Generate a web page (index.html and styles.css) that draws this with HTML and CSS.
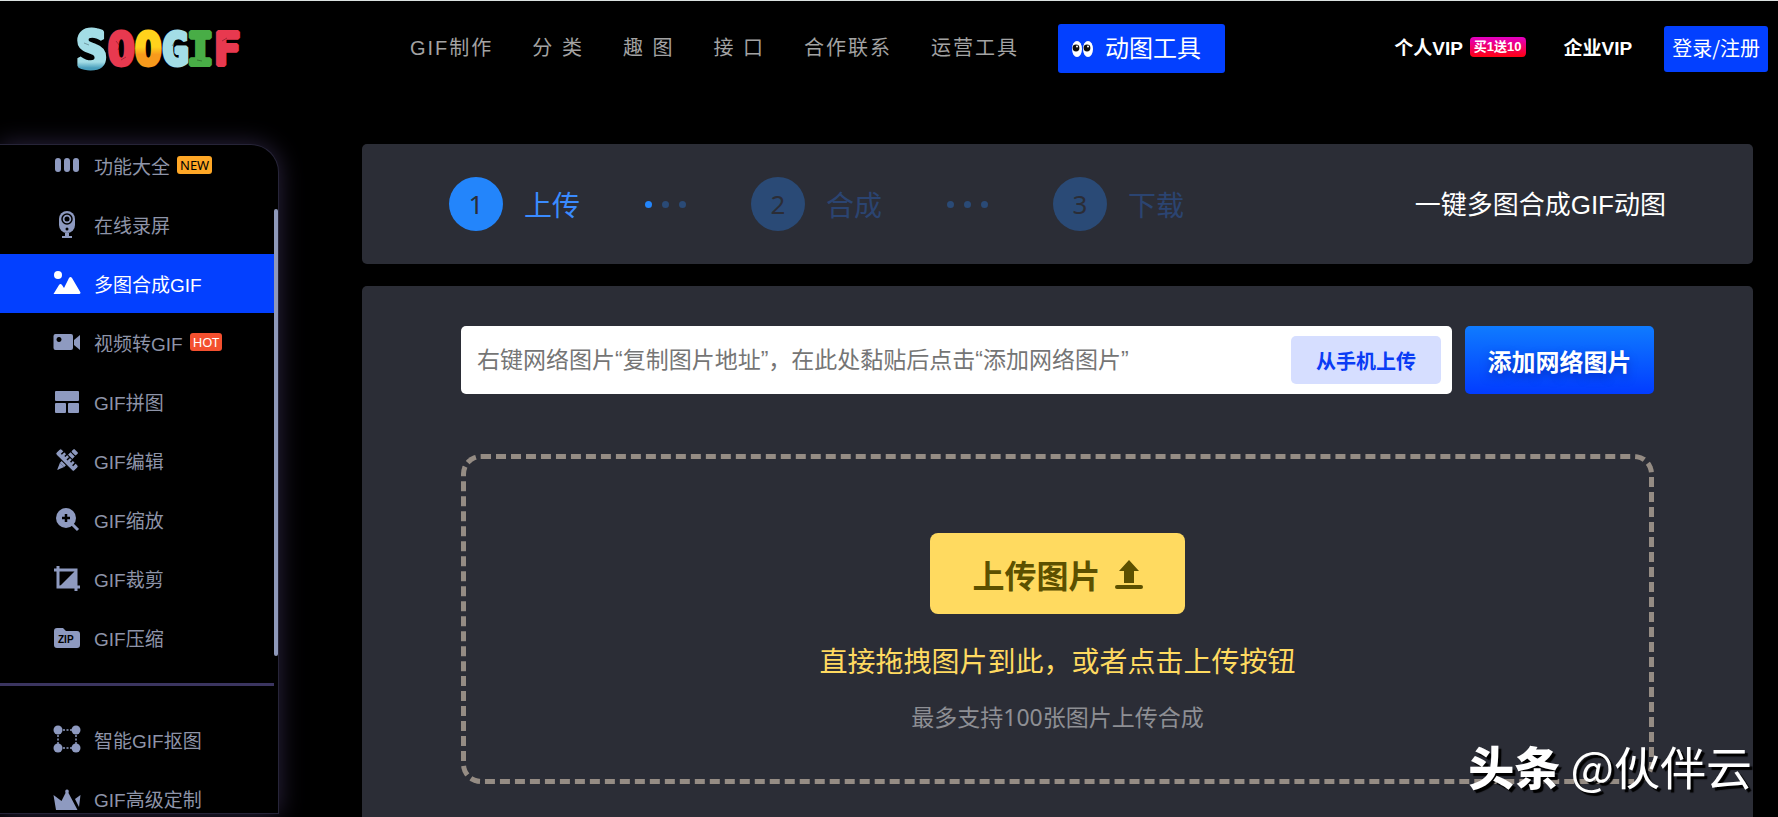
FILE: index.html
```
<!DOCTYPE html>
<html lang="zh-CN">
<head>
    <meta charset="UTF-8">
    <meta name="viewport" content="width=device-width, initial-scale=1.0">
    <title>多图合成GIF - SOOGIF</title>
    <link rel="stylesheet" href="styles.css">
</head>
<body>
    <header class="header">
        <a class="logo" href="#" aria-label="SOOGIF">
            <svg width="166" height="60" viewBox="0 0 166 60">
                <defs>
                    <linearGradient id="ice" x1="0" y1="0" x2="0" y2="1">
                        <stop offset="0.7" stop-color="#a3dde6"/>
                        <stop offset="0.8" stop-color="#4a9fbd"/>
                    </linearGradient>
                    <linearGradient id="sun" x1="0" y1="0" x2="0" y2="1">
                        <stop offset="0.45" stop-color="#ffd21c"/>
                        <stop offset="0.6" stop-color="#f79a1c"/>
                    </linearGradient>
                </defs>
                <g class="logo-text">
                    <text x="0" y="49" fill="url(#ice)" stroke="url(#ice)" class="logo-big">S</text>
                    <text x="32" y="46" fill="#e8394f" stroke="#e8394f">O</text>
                    <text x="59" y="46" fill="url(#sun)" stroke="url(#sun)">O</text>
                    <text x="86" y="46" fill="#a3dde6" stroke="#a3dde6">G</text>
                    <text x="111" y="46" fill="#48ad46" stroke="#48ad46">I</text>
                    <text x="138" y="46" fill="#e8394f" stroke="#e8394f">F</text>
                </g>
                <path class="logo-cracks" d="M40 22l4 5-2 4M50 38l-5 3M8 24l5 2M100 21l-4 6M126 42l-5-1M146 22l5-3"/>
            </svg>
        </a>
        <nav class="nav">
            <a href="#">GIF制作</a>
            <a href="#">分 类</a>
            <a href="#">趣 图</a>
            <a href="#">接 口</a>
            <a href="#">合作联系</a>
            <a href="#">运营工具</a>
            <a class="nav-tools" href="#">
                <svg width="22" height="20" viewBox="0 0 22 20">
                    <ellipse cx="5" cy="10" rx="5" ry="8" fill="#fff"/>
                    <ellipse cx="16" cy="10" rx="5" ry="8" fill="#fff"/>
                    <circle cx="4" cy="9" r="3.4" fill="#111"/>
                    <circle cx="15" cy="9" r="3.4" fill="#111"/>
                    <circle cx="5" cy="7.5" r="1" fill="#fff"/>
                    <circle cx="16" cy="7.5" r="1" fill="#fff"/>
                </svg>
                <span>动图工具</span>
            </a>
        </nav>
        <div class="account">
            <a class="vip" href="#">个人VIP<span class="vip-badge">买1送10</span></a>
            <a class="vip" href="#">企业VIP</a>
            <button class="login" type="button">登录/注册</button>
        </div>
    </header>

    <div class="layout">
        <aside class="sidebar">
            <div class="menu-wrap">
                <ul class="menu">
                    <li><a href="#">
                        <svg viewBox="0 0 28 28"><rect x="2" y="7" width="6" height="14" rx="3"/><rect x="11" y="7" width="6" height="14" rx="3"/><rect x="20" y="7" width="6" height="14" rx="3"/></svg>
                        功能大全<span class="tag tag-new">NEW</span></a></li>
                    <li><a href="#">
                        <svg viewBox="0 0 28 28"><rect x="6" y="1" width="16" height="22" rx="8"/><circle cx="14" cy="9" r="5" fill="none" stroke="#000" stroke-width="1.5"/><circle cx="14" cy="9" r="2.5" fill="#000"/><circle cx="14" cy="19" r="1.5" fill="#000"/><path d="M12 23h4v3h3v2H9v-2h3z"/></svg>
                        在线录屏</a></li>
                    <li><a class="active" href="#">
                        <svg viewBox="0 0 28 28"><circle cx="5" cy="6" r="4"/><path d="M.5 25 6 16q1.500-2 3 0l2 3L16 9q1.500-2 3 0l8.500 14.500q0 1.500-1.500 1.500z"/></svg>
                        多图合成GIF</a></li>
                    <li><a href="#">
                        <svg viewBox="0 0 28 28"><path fill-rule="evenodd" d="M2.500 6H18q2 0 2 2v12q0 2-2 2H2.500q-2 0-2-2V8q0-2 2-2zM6 9a2.500 2.500 0 1 0 .01 0z"/><path d="M21 12l6-5v15l-6-5z"/></svg>
                        视频转GIF<span class="tag tag-hot">HOT</span></a></li>
                    <li><a href="#">
                        <svg viewBox="0 0 28 28"><rect x="2" y="4" width="24" height="10" rx="1"/><rect x="2" y="16" width="11" height="10" rx="1"/><rect x="15" y="16" width="11" height="10" rx="1"/></svg>
                        GIF拼图</a></li>
                    <li><a href="#">
                        <svg viewBox="0 0 28 28"><g transform="rotate(45 14 14)"><rect x="11" y="1" width="6" height="4" rx="1"/><rect x="11" y="6" width="6" height="15"/><path d="M11 21h6l-3 7z"/></g><g transform="rotate(-45 14 14)"><rect x="10" y="1" width="8" height="26" rx="2" stroke="#000"/><path d="M14 6h4M15 10h3M14 14h4M15 18h3M14 22h4" stroke="#000" stroke-width="1.500"/></g></svg>
                        GIF编辑</a></li>
                    <li><a href="#">
                        <svg viewBox="0 0 28 28"><circle cx="13" cy="13" r="10"/><path d="M19 19l6 6" class="line"/><path d="M13 9v8M9 13h8" stroke="#000" stroke-width="2.500"/></svg>
                        GIF缩放</a></li>
                    <li><a href="#">
                        <svg viewBox="0 0 28 28"><path d="M1 6h22v21M5 2v21h22" class="line"/><path d="M23 6v17H6z"/></svg>
                        GIF裁剪</a></li>
                    <li><a href="#">
                        <svg viewBox="0 0 28 28"><path d="M4 5h6l3 3h11q3 0 3 3v11q0 3-3 3H4q-3 0-3-3V8q0-3 3-3z"/><text x="5" y="20" class="zip">ZIP</text></svg>
                        GIF压缩</a></li>
                </ul>
                <ul class="menu menu-extra">
                    <li><a href="#">
                        <svg viewBox="0 0 28 28"><circle cx="5" cy="5" r="4.500"/><circle cx="23" cy="5" r="4.500"/><circle cx="5" cy="23" r="4.500"/><circle cx="23" cy="23" r="4.500"/><path d="M10 5h9M10 23h9M5 10v9M23 10v9" fill="none" stroke="#8e9ac0" stroke-width="1.500" stroke-dasharray="2 1.500"/></svg>
                        智能GIF抠图</a></li>
                    <li><a href="#">
                        <svg viewBox="0 0 28 28"><path d="M3 26 .5 11l8 6 4-8q-1-3.500 1.500-3.500T15.500 9l9 17z"/><path d="M27.500 11 26 23l-4-8z"/></svg>
                        GIF高级定制</a></li>
                </ul>
            </div>
            <span class="scroll-thumb"></span>
        </aside>

        <main class="content">
            <section class="panel steps">
                <ol class="step-list">
                    <li class="step current"><span class="step-num">1</span>上传</li>
                    <li class="dots current" aria-hidden="true"><i></i><i></i><i></i></li>
                    <li class="step"><span class="step-num">2</span>合成</li>
                    <li class="dots" aria-hidden="true"><i></i><i></i><i></i></li>
                    <li class="step"><span class="step-num">3</span>下载</li>
                </ol>
                <h1>一键多图合成GIF动图</h1>
            </section>

            <section class="panel upload">
                <form class="url-form">
                    <div class="url-box">
                        <input type="text" aria-label="网络图片地址" placeholder="右键网络图片“复制图片地址”，在此处黏贴后点击“添加网络图片”">
                        <button class="from-phone" type="button">从手机上传</button>
                    </div>
                    <button class="add-url" type="button">添加网络图片</button>
                </form>
                <div class="dropzone">
                    <button class="upload-btn" type="button">
                        上传图片
                        <svg width="28" height="30" viewBox="0 0 28 30"><path d="M14 1l10 11h-5v12H9V12H4z"/><rect x="0" y="26" width="28" height="4" rx="2"/></svg>
                    </button>
                    <p class="drop-text">直接拖拽图片到此，或者点击上传按钮</p>
                    <p class="drop-note">最多支持100张图片上传合成</p>
                </div>
            </section>
        </main>
    </div>

    <div class="watermark"><b>头条</b> @伙伴云</div>
</body>
</html>
```
FILE: styles.css
```
* {
    box-sizing: border-box;
}
body {
    margin: 0;
    height: 100vh;
    display: flex;
    flex-direction: column;
    overflow: hidden;
    background: #000;
    border-top: 1px solid #dbe1e0;
    color: #fff;
    font-family: "Liberation Sans", "Noto Sans CJK SC", sans-serif;
}
a {
    color: inherit;
    text-decoration: none;
}
button, input {
    font-family: inherit;
    border: 0;
    padding: 0;
}
button {
    cursor: pointer;
}
ul, ol {
    list-style: none;
    margin: 0;
    padding: 0;
}

/* header */
.header {
    display: flex;
    align-items: center;
    flex: none;
    height: 95px;
    padding: 0 10px 0 76px;
    white-space: nowrap;
}
.logo {
    width: 166px;
    height: 60px;
    margin-right: 168px;
}
.logo svg {
    overflow: visible;
}
.logo-text {
    font-family: "DejaVu Sans Mono", monospace;
    font-weight: bold;
    font-size: 44px;
    stroke-width: 4px;
    stroke-linejoin: bevel;
}
.logo-big {
    font-size: 52px;
}
.logo-cracks {
    fill: none;
    stroke: #000;
    stroke-opacity: 0.3;
}
.nav {
    display: flex;
    align-items: center;
    gap: 39px;
    font-size: 20px;
    letter-spacing: 2px;
    color: #a3a3a3;
}
.nav > a:not(.nav-tools), .nav-tools span, .vip {
    padding-bottom: 4px;
}
.nav-tools {
    display: flex;
    align-items: center;
    gap: 11px;
    height: 49px;
    padding: 0 24px 0 14px;
    border-radius: 3px;
    background: #0340ff;
    color: #fff;
    font-size: 24px;
    letter-spacing: 0;
}
.account {
    display: flex;
    align-items: center;
    margin-left: auto;
}
.vip {
    display: flex;
    align-items: center;
    margin-right: 38px;
    font-size: 19px;
    font-weight: bold;
}
.vip + .vip {
    margin-right: 32px;
}
.vip-badge {
    margin-left: 7px;
    padding: 0 4px;
    border-radius: 4px;
    background: linear-gradient(#e300c4, #ff0010);
    font-size: 13px;
    line-height: 20px;
}
.login {
    height: 46px;
    padding: 0 8px 2px;
    border-radius: 3px;
    background: #0340ff;
    color: #fff;
    font-family: "Noto Sans CJK SC", sans-serif;
    font-size: 20px;
}

/* left menu */
.layout {
    display: flex;
    flex: 1;
    min-height: 0;
    padding-top: 48px;
}
.sidebar {
    position: relative;
    flex: none;
    width: 279px;
    margin-bottom: 3px;
    padding-bottom: 2px;
    border: 1px solid #262438;
    border-left: 0;
    border-radius: 0 28px 0 0;
    background: #000;
    box-shadow: 0 0 24px #2c2440;
}
.menu-wrap {
    height: 100%;
    overflow: hidden;
    margin-right: 4px;
}
.menu {
    margin-top: -9px;
    padding-bottom: 16px;
}
.menu a {
    display: flex;
    align-items: center;
    height: 59px;
    padding: 0 0 1px 53px;
    color: #8e94a8;
    font-size: 19px;
}
.menu svg {
    flex: none;
    width: 28px;
    height: 28px;
    margin-right: 13px;
    fill: #8e9ac0;
}
.menu .line {
    fill: none;
    stroke: #8e9ac0;
    stroke-width: 3px;
}
.menu .zip {
    fill: #000;
    font-size: 10px;
    font-weight: bold;
}
.menu .active {
    background: #0340ff;
    color: #fff;
}
.menu .active svg {
    fill: #fff;
}
.menu-extra {
    margin-top: 0;
    padding-top: 24px;
    border-top: 3px solid #3b3560;
}
.tag {
    margin-left: 7px;
    padding: 0 3px;
    border-radius: 3px;
    font-family: "Noto Sans", sans-serif;
    font-size: 13px;
    line-height: 18px;
}
.tag-new {
    background: #ffa726;
    color: #000;
}
.tag-hot {
    background: #f4502f;
    color: #fff;
}
.scroll-thumb {
    position: absolute;
    top: 64px;
    right: 0;
    width: 4px;
    height: 447px;
    border-radius: 2px;
    background: #8e98ba;
}

/* main column */
.content {
    display: flex;
    flex: 1;
    flex-direction: column;
    gap: 22px;
    margin: 0 25px 0 83px;
}
.panel {
    border-radius: 5px;
    background: #2b2d36;
}
.steps {
    display: flex;
    align-items: center;
    justify-content: space-between;
    height: 120px;
    padding: 0 87px;
}
.steps h1 {
    margin: 0;
    padding-bottom: 4px;
    font-size: 26px;
    font-weight: normal;
}
.step-list {
    display: flex;
    align-items: center;
}
.step {
    display: flex;
    align-items: center;
    gap: 21px;
    color: #2b4471;
    font-size: 28px;
}
.step-num {
    width: 54px;
    border-radius: 50%;
    background: #2a4a76;
    color: #2b2d36;
    font-family: "Noto Sans", sans-serif;
    font-size: 26px;
    line-height: 54px;
    text-align: center;
}
.dots {
    display: flex;
    gap: 10px;
    margin: 0 65px;
}
.dots i {
    width: 7px;
    height: 7px;
    border-radius: 50%;
    background: #2a4a76;
}
.step.current {
    color: #3a8bff;
}
.step.current .step-num, .dots.current i:first-child {
    background: #2385fb;
}
.upload {
    flex: 1;
    padding: 40px 99px 0;
    border-radius: 5px 5px 0 0;
}
.url-form {
    display: flex;
    gap: 13px;
    height: 68px;
}
.url-box {
    display: flex;
    flex: 1;
    align-items: center;
    padding: 0 11px 0 16px;
    border-radius: 5px;
    background: #fff;
}
.url-box input {
    flex: 1;
    min-width: 0;
    background: none;
    color: #333;
    font-size: 23px;
    outline: 0;
}
.url-box input::placeholder {
    color: #757575;
}
.from-phone {
    width: 150px;
    height: 48px;
    border-radius: 5px;
    background: #d6deff;
    color: #0a3cf5;
    font-size: 20px;
    font-weight: bold;
}
.add-url {
    width: 189px;
    border-radius: 5px;
    background: linear-gradient(#0f7bff, #023cff);
    color: #fff;
    font-size: 24px;
    font-weight: bold;
    text-shadow: 0 4px 8px rgba(0, 20, 140, 0.5);
}
.dropzone {
    display: flex;
    flex-direction: column;
    align-items: center;
    margin-top: 60px;
    padding: 74px 0 45px;
    border: 5px dashed #958c84;
    border-radius: 20px;
}
.upload-btn {
    display: flex;
    align-items: center;
    justify-content: center;
    gap: 14px;
    width: 255px;
    height: 81px;
    border-radius: 8px;
    background: #ffda60;
    color: #5c5000;
    font-size: 32px;
    font-weight: bold;
}
.upload-btn svg {
    fill: #5c5000;
}
.drop-text {
    margin: 29px 0 0;
    color: #ffda60;
    font-size: 28px;
    line-height: 40px;
}
.drop-note {
    margin: 17px 0 0;
    color: #8e8f94;
    font-family: "Noto Sans", "Noto Sans CJK SC", sans-serif;
    font-size: 23px;
    line-height: 34px;
}

/* corner mark */
.watermark {
    position: fixed;
    right: 26px;
    bottom: 24px;
    font-family: "Noto Sans CJK SC", sans-serif;
    font-size: 46px;
    line-height: 56px;
    text-shadow: 3px 3px 1px #000;
}
.watermark b {
    font-weight: 900;
}
```
